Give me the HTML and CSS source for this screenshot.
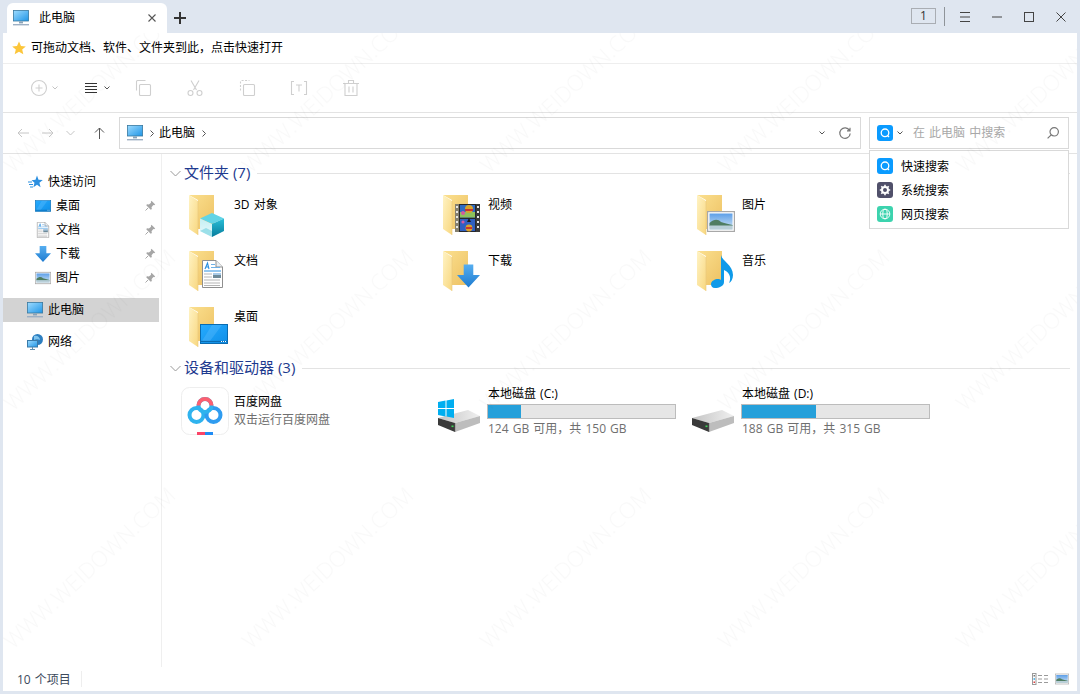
FILE: index.html
```html
<!DOCTYPE html>
<html lang="zh-CN">
<head>
<meta charset="utf-8">
<title>此电脑</title>
<link rel="stylesheet" href="styles.css">
</head>
<body>
<svg class="defs" aria-hidden="true">
  <defs>
    <linearGradient id="gScreen" x1="0" y1="0" x2="1" y2="1"><stop offset="0" stop-color="#9fdcff"/><stop offset="1" stop-color="#1f95e6"/></linearGradient>
    <linearGradient id="gBack" x1="0" y1="0" x2="1" y2="1"><stop offset="0" stop-color="#fbe08f"/><stop offset="1" stop-color="#edc163"/></linearGradient>
    <linearGradient id="gFlap" x1="0" y1="0" x2="1" y2="1"><stop offset="0" stop-color="#fff3c4"/><stop offset="1" stop-color="#f8d77f"/></linearGradient>
    <linearGradient id="gArrow" x1="0" y1="0" x2="0" y2="1"><stop offset="0" stop-color="#56aef0"/><stop offset="1" stop-color="#1d7bd0"/></linearGradient>
    <linearGradient id="gDesk" x1="0" y1="0" x2="1" y2="1"><stop offset="0" stop-color="#26abff"/><stop offset="1" stop-color="#0f8fe8"/></linearGradient>
    <linearGradient id="gSky" x1="0" y1="0" x2="0" y2="1"><stop offset="0" stop-color="#5d9fe8"/><stop offset="1" stop-color="#d4e6f4"/></linearGradient>
    <linearGradient id="gDisk" x1="0" y1="0" x2="1" y2="0"><stop offset="0" stop-color="#c4c4c4"/><stop offset="1" stop-color="#f0f0f0"/></linearGradient>
    <linearGradient id="gCubeR" x1="0" y1="0" x2="0" y2="1"><stop offset="0" stop-color="#2bbfd8"/><stop offset="1" stop-color="#067c9c"/></linearGradient>
    <linearGradient id="gCubeL" x1="0" y1="0" x2="0" y2="1"><stop offset="0" stop-color="#c5eff3"/><stop offset="1" stop-color="#eafafb"/></linearGradient>

    <symbol id="monitor" viewBox="0 0 16 16">
      <rect x=".4" y=".4" width="15.2" height="10.6" fill="url(#gScreen)" stroke="#39789f" stroke-width=".8"/>
      <rect x="6" y="11.4" width="4" height="2" fill="#8aa3b8"/>
      <rect x="0" y="14" width="16" height="1.4" fill="#9db0c4"/>
    </symbol>
    <symbol id="folder" viewBox="0 0 48 48">
      <path d="M8 5H33V39H17V10Z" fill="url(#gBack)"/>
      <path d="M8 5L17 11V45L8 39Z" fill="url(#gFlap)"/>
      <path d="M17 11V45" stroke="#e7c87d" stroke-width=".6"/>
    </symbol>
    <symbol id="cube" viewBox="0 0 24 24">
      <path d="M12 0L24 5.5L12 11L0 5.5Z" fill="#62d4e6"/>
      <path d="M0 5.5L12 11V24L0 18Z" fill="url(#gCubeL)"/>
      <path d="M12 11L24 5.5V18L12 24Z" fill="url(#gCubeR)"/>
      <path d="M0 18L6 15L12 18V24Z" fill="#7fd6e2" opacity=".7"/>
    </symbol>
    <symbol id="film" viewBox="0 0 25 28">
      <rect width="25" height="28" fill="#26282c"/>
      <rect x="0" width="4" height="28" fill="#85806f"/>
      <rect x="21" width="4" height="28" fill="#3a3a3a"/>
      <path d="M1 2h2v2H1zM1 7h2v2H1zM1 12h2v2H1zM1 17h2v2H1zM1 22h2v2H1zM22 2h2v2h-2zM22 7h2v2h-2zM22 12h2v2h-2zM22 17h2v2h-2zM22 22h2v2h-2z" fill="#e8e8e8"/>
      <rect x="5" y="1" width="15" height="12.5" fill="#2f6bc4"/>
      <rect x="5" y="8" width="15" height="5.5" fill="#8ec15c"/>
      <rect x="5" y="15" width="15" height="12" fill="#2f5fc0"/>
      <circle cx="14" cy="5" r="4" fill="#d9a32a"/><path d="M10 5h8v2h-8z" fill="#c8352f"/>
      <circle cx="8" cy="9" r="2" fill="#d45aa0"/>
      <path d="M14 14l-2 4h4z" fill="#1a1a1a"/>
      <circle cx="14" cy="24" r="3.4" fill="#d9a32a"/><path d="M11 23h6v2h-6z" fill="#c8352f"/>
      <circle cx="8" cy="18" r="1.6" fill="#d45aa0"/>
    </symbol>
    <symbol id="doc" viewBox="0 0 21 28">
      <path d="M.5.5H14L20.5 7V27.5H.5Z" fill="#fff" stroke="#8f8f8f"/>
      <path d="M14 .5V7H20.5" fill="#e9eef2" stroke="#8f8f8f"/>
      <path d="M3 9L5.5 3L7 9M4 7H6.5" fill="none" stroke="#2a8fe0" stroke-width="1.1"/>
      <path d="M9 4.500h4M9 7.500h9" stroke="#6fb0e6"/>
      <path d="M2 11h17" stroke="#2a8fe0"/>
      <path d="M2 14h8M2 17h8M2 20h16M2 23h16M2 25.500h16" stroke="#b5b5b5"/>
      <rect x="11" y="13" width="8" height="5" fill="#6f8a98"/>
      <rect x="11" y="13" width="8" height="2" fill="#a9cbe8"/>
    </symbol>
    <symbol id="arrow" viewBox="0 0 24 24">
      <path d="M7 0H17V11H24L12 24L0 11H7Z" fill="url(#gArrow)"/>
    </symbol>
    <symbol id="desk" viewBox="0 0 28 20">
      <rect x=".5" y=".5" width="27" height="19" fill="url(#gDesk)" stroke="#0a6bb0"/>
      <path d="M12 1H22L10 17H2Z" fill="#6cc5ff" opacity=".3"/>
      <path d="M1 17.500h26" stroke="#0a6bb0" stroke-width="1.200"/>
      <path d="M21 17.500h1M23 17.500h1M25 17.500h1" stroke="#fff"/>
    </symbol>
    <symbol id="pic" viewBox="0 0 28 21">
      <rect x=".5" y=".5" width="27" height="20" fill="#fff" stroke="#a8a8a8" stroke-width="1.400"/>
      <rect x="2.500" y="2.500" width="23" height="16" fill="url(#gSky)"/>
      <path d="M2.500 12C7 8 11 8 14 11C17 12 21 13 25.500 14V15H2.500Z" fill="#4f7d62"/>
      <rect x="2.500" y="14.500" width="23" height="4" fill="#b9cfd8"/>
    </symbol>
    <symbol id="note" viewBox="0 0 22 33">
      <path d="M10 0C11 6 22 10 22 20C22 24 20 27 18 28C20 24 20 18 13 15V27C13 31 8 33 4 33C1 33 0 31 0 29C0 26 4 24 7 24C8 24 9 24 10 25Z" fill="#0f9ae9"/>
    </symbol>
    <symbol id="pin" viewBox="0 0 16 16">
      <path d="M10 1L15 6L13.500 7L12.500 6.500L10 9.500L10.500 12L9 13L3 7L4 5.500L6.500 6L9.500 3.500L9 2.500Z" fill="#a6a6a6"/>
      <path d="M5.500 10.500L2 14" stroke="#a6a6a6" stroke-width="1.300"/>
    </symbol>
    <symbol id="chev" viewBox="0 0 8 6">
      <path d="M1.500 1.500L4 4L6.500 1.500" fill="none" stroke="currentColor" stroke-width="1"/>
    </symbol>
    <symbol id="hdd" viewBox="0 0 48 48">
      <path d="M3 31L33 23L45 29L20 36Z" fill="url(#gDisk)"/>
      <path d="M3 31L20 36V45L3 38Z" fill="#3a3a3a"/>
      <path d="M20 36L45 29V36L20 45Z" fill="#bdbdbd"/>
      <path d="M20 36V45" stroke="#666" stroke-width=".5"/>
      <rect x="16.500" y="38.500" width="2" height="1.600" fill="#3fd65a"/>
    </symbol>
    <symbol id="qs" viewBox="0 0 16 16">
      <rect width="16" height="16" rx="3" fill="#0a9bff"/>
      <circle cx="8" cy="7.800" r="3.800" fill="none" stroke="#fff" stroke-width="1.300"/>
      <path d="M10.500 10.500L12 12" stroke="#fff" stroke-width="1.200"/>
    </symbol>
  </defs>
</svg>

<div class="window">
  <header class="tabbar">
    <div class="tab">
      <svg class="i16"><use href="#monitor"/></svg>
      <span class="tab-title">此电脑</span>
      <svg class="tab-close" viewBox="0 0 8 8"><path d="M.5.5L7.500 7.500M7.500.5L.5 7.500"/></svg>
    </div>
    <svg class="tab-add" viewBox="0 0 12 12"><path d="M6 0V12M0 6H12"/></svg>
    <div class="winctl">
      <span class="counter">1</span>
      <span class="winsep"></span>
      <svg class="wbtn wbtn-menu" viewBox="0 0 10 10"><path d="M0 .5H10M0 5H10M0 9.500H10"/></svg>
      <svg class="wbtn" viewBox="0 0 10 10"><path d="M0 5H10"/></svg>
      <svg class="wbtn" viewBox="0 0 10 10"><rect x=".5" y=".5" width="9" height="9"/></svg>
      <svg class="wbtn wbtn-last" viewBox="0 0 10 10"><path d="M.5.5L9.500 9.500M9.500.5L.5 9.500"/></svg>
    </div>
  </header>

  <div class="content">
    <div class="hintbar">
      <svg class="star" viewBox="0 0 14 14"><path d="M7 .5L9 5L13.800 5.400L10.200 8.500L11.300 13.300L7 10.800L2.700 13.300L3.800 8.500L.2 5.400L5 5Z"/></svg>
      <span>可拖动文档、软件、文件夹到此，点击快速打开</span>
    </div>

    <div class="toolbar">
      <div class="tool-group tool-first">
        <svg class="tool" viewBox="0 0 16 16"><circle cx="8" cy="8" r="7.500"/><path d="M8 4.500V11.500M4.500 8H11.500"/></svg>
        <svg class="chev chev-light"><use href="#chev"/></svg>
      </div>
      <div class="tool-group tool-menu">
        <svg class="tool tool-dark" viewBox="0 0 12 10"><path d="M0 .5H12M0 3.500H12M0 6.500H12M0 9.500H12"/></svg>
        <svg class="chev"><use href="#chev"/></svg>
      </div>
      <svg class="tool tool-item" viewBox="0 0 16 16"><path d="M1.500 10.500V1.500Q1.500.5 2.500.5H10.500"/><rect x="4.500" y="4.500" width="11" height="11" rx="1"/></svg>
      <svg class="tool tool-item" viewBox="0 0 16 16"><path d="M4 .5L9.500 10M12 .5L6.500 10"/><circle cx="3.500" cy="13" r="2.500"/><circle cx="12.500" cy="13" r="2.500"/></svg>
      <svg class="tool tool-item" viewBox="0 0 16 16"><path d="M1.500 10.500V1.500Q1.500.5 2.500.5H10.500" stroke-dasharray="2 1.500"/><rect x="4.500" y="4.500" width="11" height="11" rx="1"/></svg>
      <svg class="tool tool-item" viewBox="0 0 16 16"><path d="M3 1.500H.5V14.500H3M13 1.500H15.500V14.500H13M5 5H11M8 5V11.500"/></svg>
      <svg class="tool tool-item" viewBox="0 0 16 16"><path d="M0 3.500H16M5.500 3.500V.5H10.500V3.500M2 3.500V15.500H14V3.500M6 6.500V12.500M10 6.500V12.500"/></svg>
    </div>

    <nav class="navbar">
      <svg class="nav-ic nav-back" viewBox="0 0 12 10"><path d="M12 5H1M5 1L1 5L5 9"/></svg>
      <svg class="nav-ic nav-fwd" viewBox="0 0 12 10"><path d="M0 5H11M7 1L11 5L7 9"/></svg>
      <svg class="nav-ic nav-down" viewBox="0 0 9 6"><path d="M.5 1L4.500 5L8.500 1"/></svg>
      <svg class="nav-ic nav-up" viewBox="0 0 11 12"><path d="M5.500 12V1M1 5.500L5.500 1L10 5.500"/></svg>
      <div class="address">
        <svg class="i16"><use href="#monitor"/></svg>
        <svg class="crumb" viewBox="0 0 4 7"><path d="M.5.5L3.500 3.500L.5 6.500"/></svg>
        <span class="crumb-text">此电脑</span>
        <svg class="crumb" viewBox="0 0 4 7"><path d="M.5.5L3.500 3.500L.5 6.500"/></svg>
        <svg class="chev addr-chev"><use href="#chev"/></svg>
        <svg class="refresh" viewBox="0 0 12 12"><path d="M10.500 3.500A5.200 5.200 0 1 0 11.200 6.500M11 .8V3.800H8"/></svg>
      </div>
      <div class="search">
        <svg class="i16"><use href="#qs"/></svg>
        <svg class="chev search-chev"><use href="#chev"/></svg>
        <span class="placeholder">在 此电脑 中搜索</span>
        <svg class="magnifier" viewBox="0 0 12 12"><circle cx="7.200" cy="4.800" r="4.200"/><path d="M4.200 7.800L.6 11.400"/></svg>
        <div class="menu">
          <div class="menu-row"><svg class="i16"><use href="#qs"/></svg><span>快速搜索</span></div>
          <div class="menu-row">
            <svg class="i16" viewBox="0 0 16 16"><rect width="16" height="16" rx="3" fill="#50506a"/><circle cx="8" cy="8" r="3" fill="none" stroke="#fff" stroke-width="2"/><path d="M8 2.800V4.500M8 11.500V13.200M2.800 8H4.500M11.500 8H13.200M4.300 4.300L5.500 5.500M10.500 10.500L11.700 11.700M11.700 4.300L10.500 5.500M5.500 10.500L4.300 11.700" stroke="#fff" stroke-width="1.600"/></svg>
            <span>系统搜索</span>
          </div>
          <div class="menu-row">
            <svg class="i16" viewBox="0 0 16 16"><rect width="16" height="16" rx="3" fill="#3cd3ae"/><g fill="none" stroke="#fff" stroke-width=".9"><circle cx="8" cy="8" r="4.800"/><ellipse cx="8" cy="8" rx="2.200" ry="4.800"/><path d="M3.200 8H12.800"/></g></svg>
            <span>网页搜索</span>
          </div>
        </div>
      </div>
    </nav>

    <div class="body">
      <aside class="sidebar">
        <div class="side-row side-top">
          <svg class="i16" viewBox="0 0 16 16"><path d="M10 1.500L11.500 5.800L15.800 6L12.400 8.800L13.600 13.200L10 10.700L6.400 13.200L7.500 8.800L4.500 6.200L8.500 5.800Z" fill="#2b8fe0"/><path d="M1 8H5M2 10.500H6M3 13H6" stroke="#2b8fe0" stroke-width="1.200"/></svg>
          <span>快速访问</span>
        </div>
        <div class="side-row side-sub"><svg class="i16"><use href="#desk"/></svg><span>桌面</span><svg class="pin"><use href="#pin"/></svg></div>
        <div class="side-row side-sub"><svg class="i16"><use href="#doc"/></svg><span>文档</span><svg class="pin"><use href="#pin"/></svg></div>
        <div class="side-row side-sub"><svg class="i16"><use href="#arrow"/></svg><span>下载</span><svg class="pin"><use href="#pin"/></svg></div>
        <div class="side-row side-sub"><svg class="i16"><use href="#pic"/></svg><span>图片</span><svg class="pin"><use href="#pin"/></svg></div>
        <div class="side-row side-top side-sel"><svg class="i16"><use href="#monitor"/></svg><span>此电脑</span></div>
        <div class="side-row side-top side-net">
          <svg class="i16" viewBox="0 0 16 16"><circle cx="10.500" cy="5.500" r="5.500" fill="#2d7fc0"/><path d="M7 2C10 1 13 3 13 6C11 5 9 5 7 6Z" fill="#7fc4ee"/><rect x=".5" y="6.500" width="10" height="6.500" fill="url(#gScreen)" stroke="#3a7aa8"/><path d="M5.500 13V15.500M3 15.500H8" stroke="#5f8fb0"/></svg>
          <span>网络</span>
        </div>
      </aside>

      <main class="main">
        <div class="sec-head">
          <svg class="sec-chev" viewBox="0 0 11 7"><path d="M.5 1L5.500 6L10.500 1"/></svg>
          <span class="sec-title">文件夹 (7)</span>
          <span class="sec-line"></span>
        </div>
        <div class="grid grid-folders">
          <div class="item"><svg class="i48"><use href="#folder"/><use href="#cube" x="19" y="23" width="24" height="24"/></svg><span class="item-name">3D 对象</span></div>
          <div class="item"><svg class="i48"><use href="#folder"/><use href="#film" x="20" y="14" width="25" height="28"/></svg><span class="item-name">视频</span></div>
          <div class="item"><svg class="i48"><use href="#folder"/><use href="#pic" x="18" y="21" width="28" height="21"/></svg><span class="item-name">图片</span></div>
          <div class="item"><svg class="i48"><use href="#folder"/><use href="#doc" x="21" y="14" width="21" height="28"/></svg><span class="item-name">文档</span></div>
          <div class="item"><svg class="i48"><use href="#folder"/><use href="#arrow" x="22" y="18" width="23" height="24"/></svg><span class="item-name">下载</span></div>
          <div class="item"><svg class="i48"><use href="#folder"/><use href="#note" x="22" y="9" width="22" height="33"/></svg><span class="item-name">音乐</span></div>
          <div class="item"><svg class="i48"><use href="#folder"/><use href="#desk" x="19" y="22" width="28" height="20"/></svg><span class="item-name">桌面</span></div>
        </div>

        <div class="sec-head">
          <svg class="sec-chev" viewBox="0 0 11 7"><path d="M.5 1L5.500 6L10.500 1"/></svg>
          <span class="sec-title">设备和驱动器 (3)</span>
          <span class="sec-line"></span>
        </div>
        <div class="grid grid-drives">
          <div class="drive">
            <svg class="i48 drive-ic" viewBox="0 0 48 48">
              <rect x=".5" y=".5" width="47" height="47" rx="8" fill="#fff" stroke="#eeeeee"/>
              <g fill="none" stroke-width="4">
                <circle cx="15.500" cy="28" r="7" stroke="#2fb3ee"/>
                <circle cx="32.500" cy="28" r="7" stroke="#2f9cf0"/>
                <circle cx="24" cy="18.500" r="6.500" stroke="#2fb3ee"/>
                <path d="M17.500 18.500A6.500 6.500 0 0 1 30.500 18.500" stroke="#fb5f70"/>
              </g>
              <rect x="16" y="45" width="8" height="3" fill="#fb4468"/>
              <rect x="24" y="45" width="8" height="3" fill="#1f8cf5"/>
            </svg>
            <div class="drive-text baidu-text">
              <span class="item-name">百度网盘</span>
              <span class="item-sub">双击运行百度网盘</span>
            </div>
          </div>
          <div class="drive">
            <svg class="i48 drive-ic" viewBox="0 0 48 48">
              <use href="#hdd"/>
              <path d="M3 15L10.500 13.600V21H3ZM11.500 13.400L19 12V21H11.500ZM3 22H10.500V29.400L3 28ZM11.500 22H19V31L11.500 29.600Z" fill="#00aef0"/>
            </svg>
            <div class="drive-text">
              <span class="item-name">本地磁盘 (C:)</span>
              <div class="bar"><div class="bar-fill" style="width:17.500%"></div></div>
              <span class="item-sub">124 GB 可用，共 150 GB</span>
            </div>
          </div>
          <div class="drive">
            <svg class="i48 drive-ic"><use href="#hdd"/></svg>
            <div class="drive-text">
              <span class="item-name">本地磁盘 (D:)</span>
              <div class="bar"><div class="bar-fill" style="width:39.600%"></div></div>
              <span class="item-sub">188 GB 可用，共 315 GB</span>
            </div>
          </div>
        </div>
      </main>
    </div>

    <footer class="status">
      <span class="status-count">10 个项目</span>
      <span class="status-sep"></span>
      <svg class="view-list" viewBox="0 0 16 12">
        <rect x=".5" y=".5" width="3.500" height="11" fill="#fff" stroke="#9a9a9a"/>
        <path d="M1.500 2h1.500v1.500H1.500z" fill="#777"/><path d="M1.500 5.200h1.500v1.500H1.500z" fill="#2aa0e0"/><path d="M1.500 8.500h1.500v1.500H1.500z" fill="#e04040"/>
        <path d="M6 2.500h4M12 2.500h4M6 6h4M12 6h4M6 9.500h4M12 9.500h4" stroke="#9a9a9a"/>
      </svg>
      <svg class="view-pic"><use href="#pic"/></svg>
    </footer>

    <svg class="watermark" aria-hidden="true">
      <defs>
        <pattern id="wm" width="238" height="238" patternUnits="userSpaceOnUse" patternTransform="translate(-20 -59)">
          <text class="wm-text" x="30" y="200" transform="rotate(-43 30 200)">WWW.WEIDOWN.COM</text>
        </pattern>
      </defs>
      <rect width="100%" height="100%" fill="url(#wm)"/>
    </svg>
  </div>
</div>
</body>
</html>
```
FILE: styles.css
```css
* { box-sizing: border-box; }
html, body { margin: 0; padding: 0; }
body {
  width: 1080px;
  height: 694px;
  overflow: hidden;
  background: #dfe6f0;
  color: #000;
  font: 400 12px/18px "Open Sans", "Noto Sans CJK SC", sans-serif;
}
.defs { position: absolute; width: 0; height: 0; }
svg { display: block; flex: none; overflow: visible; }
.i16 { width: 16px; height: 16px; }
.i48 { width: 48px; height: 48px; }

.window { display: flex; flex-direction: column; height: 694px; }

/* title bar */
.tabbar { height: 33px; display: flex; align-items: flex-end; padding-left: 7px; flex: none; }
.tab {
  width: 160px; height: 30px; background: #fff; border-radius: 6px 6px 0 0;
  display: flex; align-items: center; padding: 0 11px 0 6px;
}
.tab-title { margin-left: 10px; flex: 1; }
.tab-close { width: 8px; height: 8px; fill: none; stroke: #555; stroke-width: 1.100; }
.tab-add { width: 12px; height: 12px; margin: 0 0 9px 7px; fill: none; stroke: #333; stroke-width: 2; }
.winctl { margin-left: auto; display: flex; align-items: center; height: 33px; }
.counter {
  width: 25px; height: 16px; border: 1px solid #a9adb3; margin-bottom: 1px;
  display: flex; align-items: center; justify-content: center; font-size: 12px; line-height: 14px; color: #333;
}
.winsep { width: 1px; height: 19px; background: #8f9499; margin: 0 15px 0 8px; }
.wbtn { width: 10px; height: 10px; margin-right: 22px; fill: none; stroke: #444; stroke-width: 1; margin-bottom: -1px; }
.wbtn-last { margin-right: 14px; }

/* content */
.content { position: relative; flex: 1; margin: 0 3px 3px; background: #fff; display: flex; flex-direction: column; }
.hintbar { height: 31px; border-bottom: 1px solid #eeeeee; display: flex; align-items: center; padding: 0 0 0 9px; gap: 5px; flex: none; }
.star { width: 14px; height: 14px; fill: #fcc63a; }

.toolbar { height: 49px; border-bottom: 1px solid #e3e3e3; display: flex; align-items: center; padding-left: 28px; flex: none; }
.tool-group { display: flex; align-items: center; }
.tool-first { width: 54px; gap: 4px; }
.tool-menu { width: 50px; gap: 6px; }
.tool { width: 16px; height: 16px; fill: none; stroke: #cfcfcf; stroke-width: 1.100; }
.tool-dark { width: 12px; height: 10px; stroke: #333; stroke-width: 1; }
.tool-item { margin-right: 36px; }
.chev { width: 8px; height: 6px; color: #555; }
.chev-light { color: #c4c4c4; }

.navbar { height: 41px; border-bottom: 1px solid #e3e3e3; display: flex; align-items: center; padding: 0 8px 0 14px; flex: none; }
.nav-ic { fill: none; stroke: #c6c6c6; stroke-width: 1; }
.nav-back { width: 12px; height: 10px; margin-right: 13px; }
.nav-fwd { width: 12px; height: 10px; margin-right: 12px; }
.nav-down { width: 9px; height: 6px; margin-right: 19px; }
.nav-up { width: 11px; height: 12px; margin-right: 14px; stroke: #555; }
.address, .search { height: 32px; border: 1px solid #d9d9d9; display: flex; align-items: center; }
.address { flex: 1; padding: 0 9px 0 7px; }
.crumb { width: 4px; height: 7px; margin-left: 7px; fill: none; stroke: #555; }
.crumb-text { margin-left: 5px; margin-right: 0; }
.addr-chev { margin-left: auto; margin-right: 13px; }
.refresh { width: 12px; height: 12px; fill: none; stroke: #777; stroke-width: 1.200; }
.search { width: 200px; margin-left: 8px; padding: 0 9px 0 7px; position: relative; }
.search-chev { margin-left: 3px; }
.placeholder { margin-left: 9px; color: #a8a8a8; flex: 1; word-spacing: 1px; }
.magnifier { width: 12px; height: 12px; fill: none; stroke: #777; stroke-width: 1.200; }
.menu {
  position: absolute; left: -1px; top: 32px; width: 200px; height: 79px; background: #fff;
  border: 1px solid #d9d9d9; padding: 3px 0 0; z-index: 2;
}
.menu-row { height: 24px; display: flex; align-items: center; gap: 8px; padding-left: 7px; }
.menu-row span { padding-top: 2px; }

/* body */
.body { flex: 1; display: flex; min-height: 0; }
.sidebar { width: 159px; border-right: 1px solid #efefef; padding: 16px 2px 0 0; flex: none; }
.side-row { height: 24px; display: flex; align-items: center; gap: 5px; }
.side-top { padding-left: 24px; }
.side-sub { padding-left: 32px; padding-right: 3px; }
.side-sel { background: #d3d3d3; margin-top: 8px; }
.side-net { margin-top: 8px; }
.pin { width: 12px; height: 12px; margin-left: auto; }

.main { flex: 1; padding: 9px 7px 0 8px; min-width: 0; }
.sec-head { height: 21px; display: flex; align-items: center; }
.sec-chev { width: 11px; height: 7px; fill: none; stroke: #9a9a9a; stroke-width: 1; margin-right: 3px; }
.sec-title { font-size: 15px; line-height: 21px; padding-bottom: 2px; color: #1e3a8f; white-space: nowrap; }
.sec-line { flex: 1; height: 1px; background: #e3e3e3; margin-left: 7px; }

.grid { display: grid; grid-template-columns: repeat(3, 254px); margin-left: 11px; }
.grid-folders { margin-top: 6px; grid-auto-rows: 56px; }
.grid-drives { margin-top: 1px; }
.item { display: flex; gap: 5px; }
.item-name { display: block; word-spacing: 1px; }
.item > .item-name { padding-top: 6px; }
.item-sub { display: block; color: #6f6f6f; word-spacing: 1px; }

.drive { display: flex; gap: 5px; }
.drive-ic { margin-top: 7px; }
.drive-text { padding-top: 5px; width: 189px; }
.baidu-text { padding-top: 13px; }
.bar { width: 189px; height: 15px; margin: 1px 0 1px -1px; background: #e6e6e6; border: 1px solid #bcbcbc; }
.bar-fill { height: 100%; background: #26a0da; }

/* status */
.status { height: 24px; display: flex; align-items: center; padding: 0 8px 0 14px; flex: none; }
.status-count { color: #3c4a5c; padding-top: 2px; word-spacing: 1px; }
.status-sep { width: 1px; height: 16px; background: #eeeeee; margin-left: 10px; }
.view-list { width: 16px; height: 12px; margin-left: auto; }
.view-pic { width: 14px; height: 12px; margin-left: 7px; }

.watermark { position: absolute; inset: 0; width: 100%; height: 100%; pointer-events: none; z-index: 3; }
.wm-text { font: 300 22px "Open Sans", sans-serif; fill: #000; fill-opacity: .022; }
```
